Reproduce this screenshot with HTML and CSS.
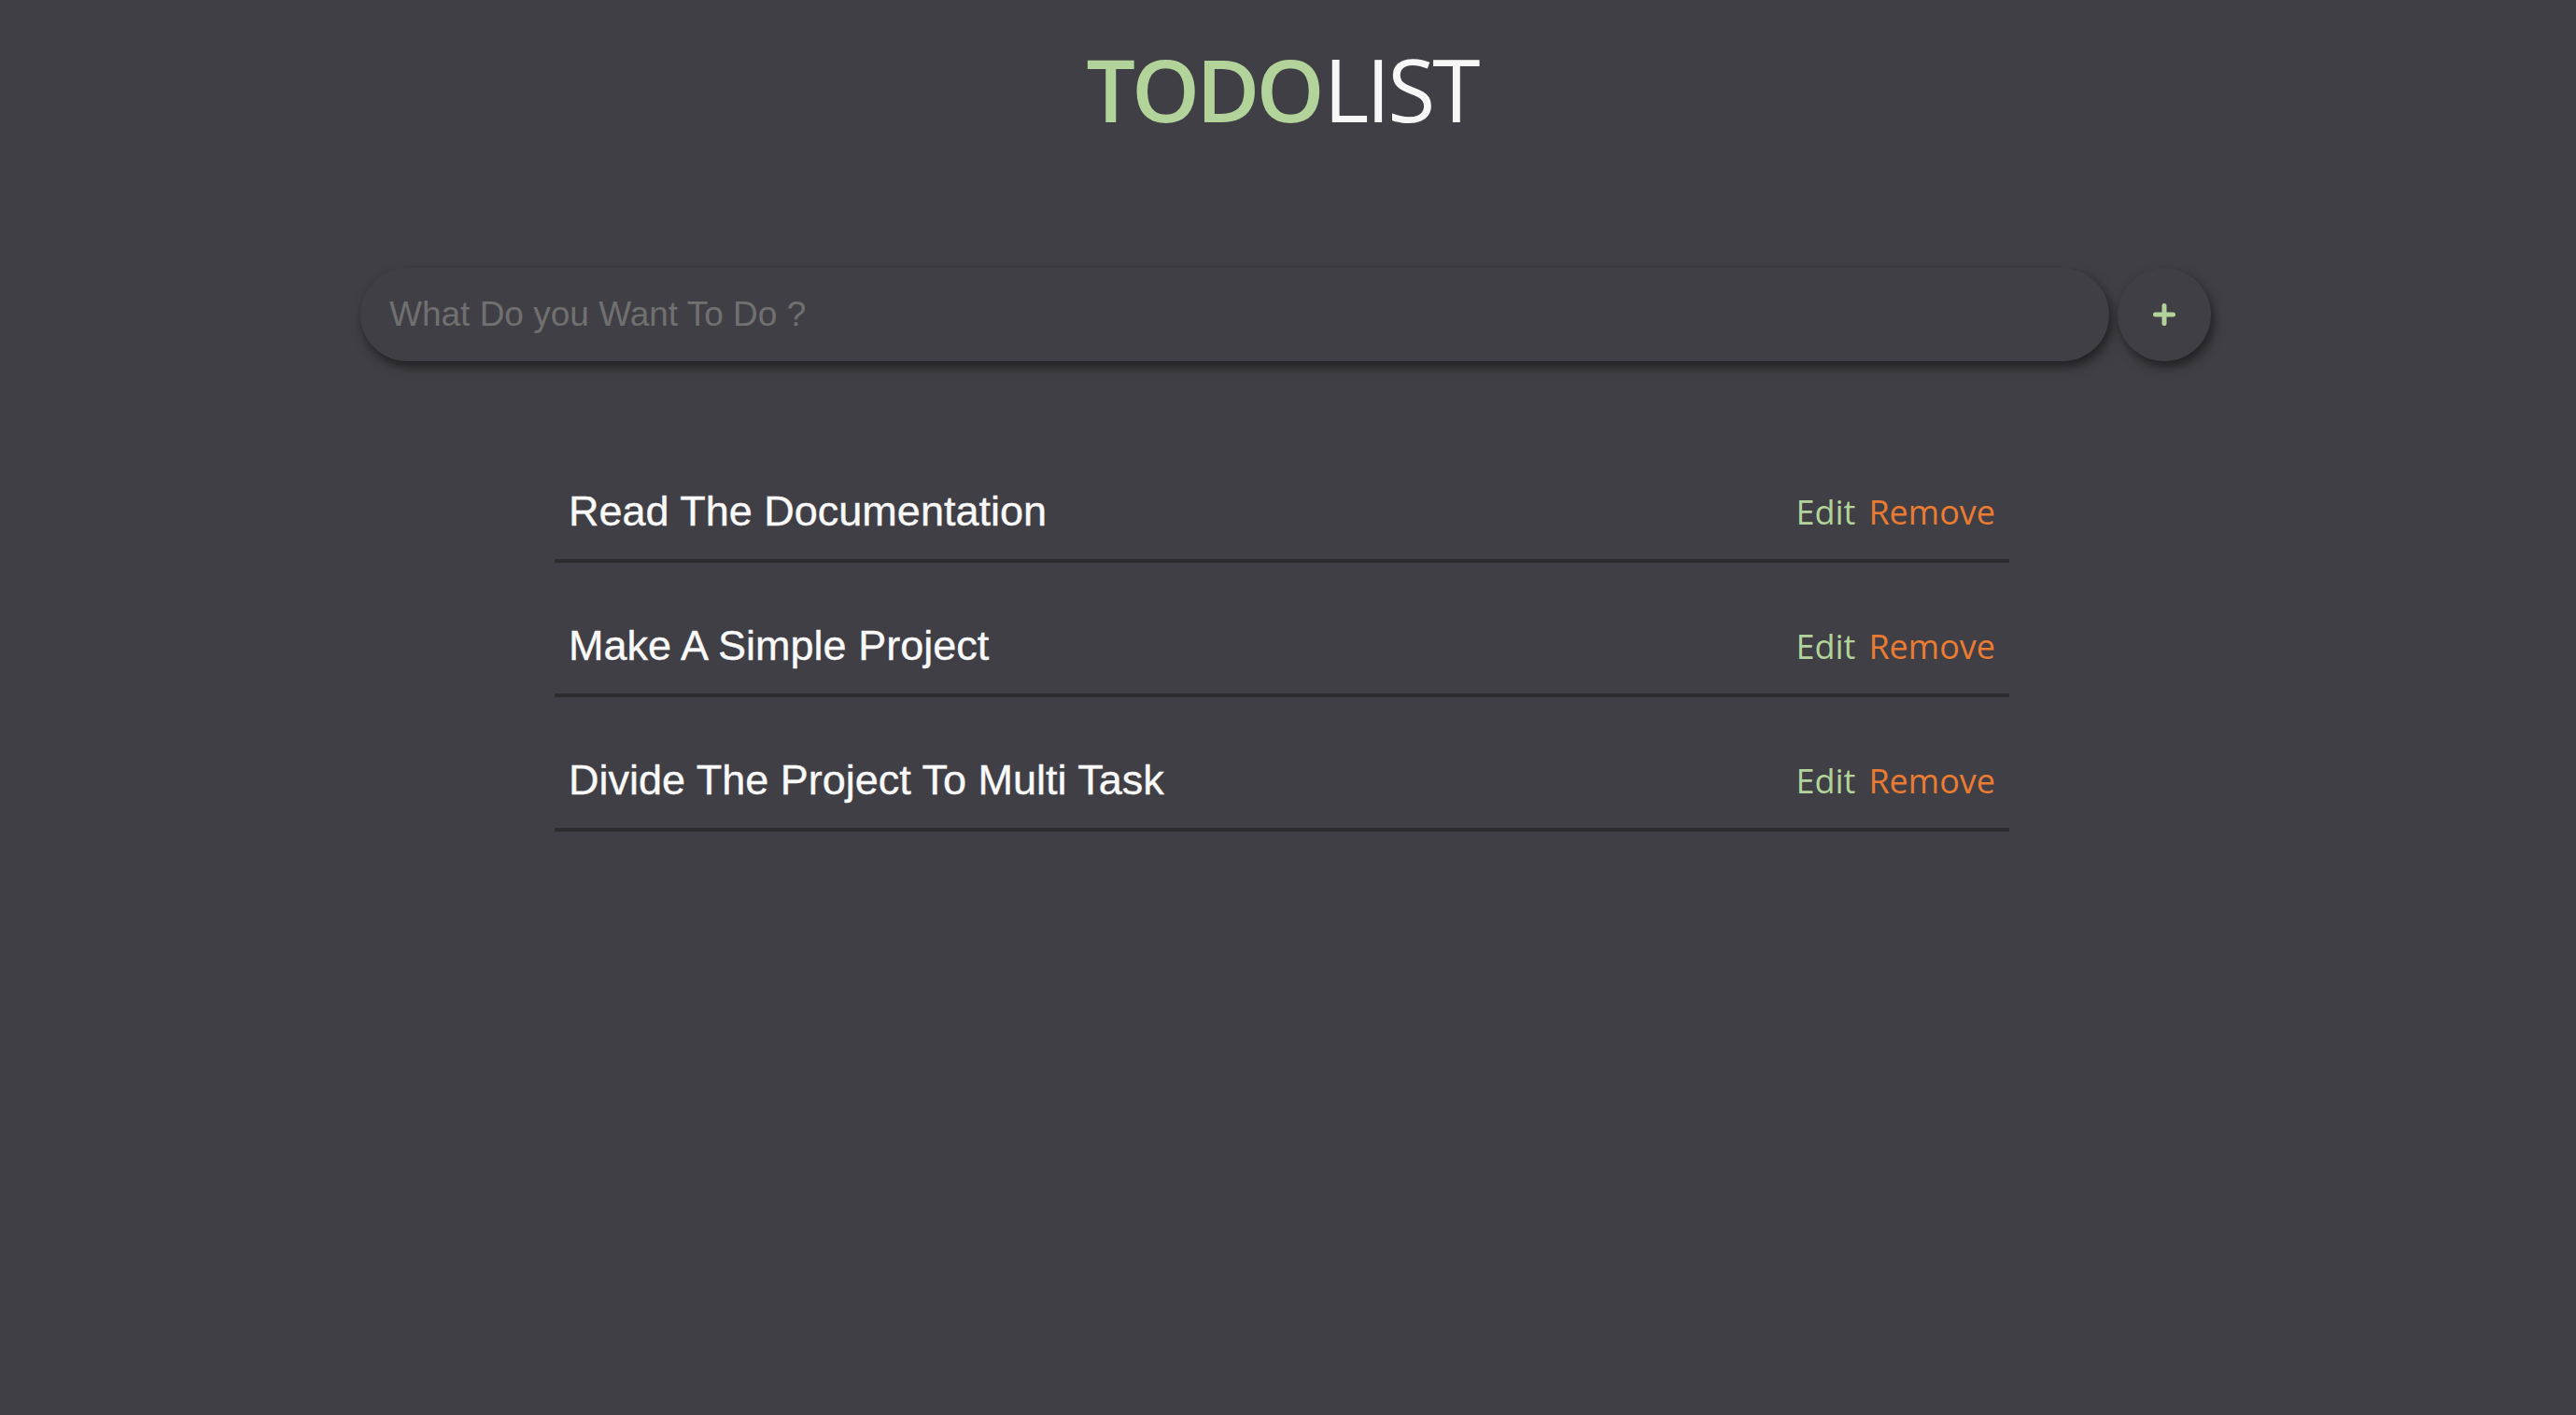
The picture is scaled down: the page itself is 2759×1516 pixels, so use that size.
FILE: index.html
```html
<!DOCTYPE html>
<html lang="en">
<head>
<meta charset="utf-8">
<title>TodoList</title>
<link rel="stylesheet" href="styles.css">
</head>
<body>
<div class="app">
  <h1 class="title"><span class="title-strong">TODO</span><span class="title-light">LIST</span></h1>
  <form class="add-row">
    <input class="add-input" type="text" placeholder="What Do you Want To Do ?" autofocus>
    <button class="add-btn" type="button" aria-label="Add">
      <svg width="24" height="24" viewBox="0 0 24 24"><path d="M12 2.5v19M2.5 12h19" stroke="#b2d49a" stroke-width="5" stroke-linecap="round" fill="none"/></svg>
    </button>
  </form>
  <ul class="todo-list">
    <li class="todo-item">
      <span class="todo-text">Read The Documentation</span>
      <span class="todo-actions"><span class="act-edit">Edit</span><span class="act-remove">Remove</span></span>
    </li>
    <li class="todo-item">
      <span class="todo-text">Make A Simple Project</span>
      <span class="todo-actions"><span class="act-edit">Edit</span><span class="act-remove">Remove</span></span>
    </li>
    <li class="todo-item">
      <span class="todo-text">Divide The Project To Multi Task</span>
      <span class="todo-actions"><span class="act-edit">Edit</span><span class="act-remove">Remove</span></span>
    </li>
  </ul>
</div>
</body>
</html>
```
FILE: styles.css
```css
html, body {
  margin: 0;
  padding: 0;
  background: #403f45;
  height: 100%;
}
body {
  font-family: "Liberation Sans", Arial, sans-serif;
  color: #f5f5f5;
}
.app {
  padding: 30px 13px 0 0;
}
.title {
  margin: 0;
  text-align: center;
  font-family: "Open Sans", "Noto Sans", sans-serif;
  font-size: 93px;
  line-height: 131px;
  font-weight: 400;
}
.title-strong {
  color: #b2d49a;
  font-weight: 600;
  letter-spacing: -4px;
  margin-right: 3px;
}
.title-light {
  color: #f7f7f7;
  letter-spacing: -3px;
}
.add-row {
  display: flex;
  gap: 9px;
  width: 1982px;
  padding-left: 8px;
  margin: 126px auto 0;
}
.add-input {
  flex: 1;
  height: 100px;
  box-sizing: border-box;
  border: none;
  outline: none;
  border-radius: 50px;
  background: #403f45;
  box-shadow: 3px 6px 12px rgba(0, 0, 0, 0.5);
  padding: 0 31px;
  font-family: "Liberation Sans", Arial, sans-serif;
  font-size: 37px;
  color: #f5f5f5;
  caret-color: #ffffff;
}
.add-input::placeholder {
  color: #707070;
}
.add-btn {
  width: 100px;
  height: 100px;
  flex: none;
  border: none;
  border-radius: 50%;
  background: #403f45;
  box-shadow: 3px 6px 12px rgba(0, 0, 0, 0.5);
  display: flex;
  align-items: center;
  justify-content: center;
  padding: 0;
  cursor: pointer;
}
.todo-list {
  list-style: none;
  width: 1558px;
  margin: 110px auto 0;
  padding: 0;
}
.todo-item {
  display: flex;
  justify-content: space-between;
  align-items: center;
  padding: 26px 15px 26px 15px;
  border-bottom: 4px solid #2c2c2f;
  margin-bottom: 38px;
}
.todo-text {
  font-size: 45px;
  line-height: 50px;
  color: #f9f9f9;
  -webkit-text-stroke: 0.4px #f9f9f9;
}
.todo-actions {
  display: flex;
  gap: 14px;
  font-family: "Open Sans", "Noto Sans", sans-serif;
  font-size: 36px;
}
.act-edit {
  color: #b2d49a;
}
.act-remove {
  color: #e97c32;
}
```
